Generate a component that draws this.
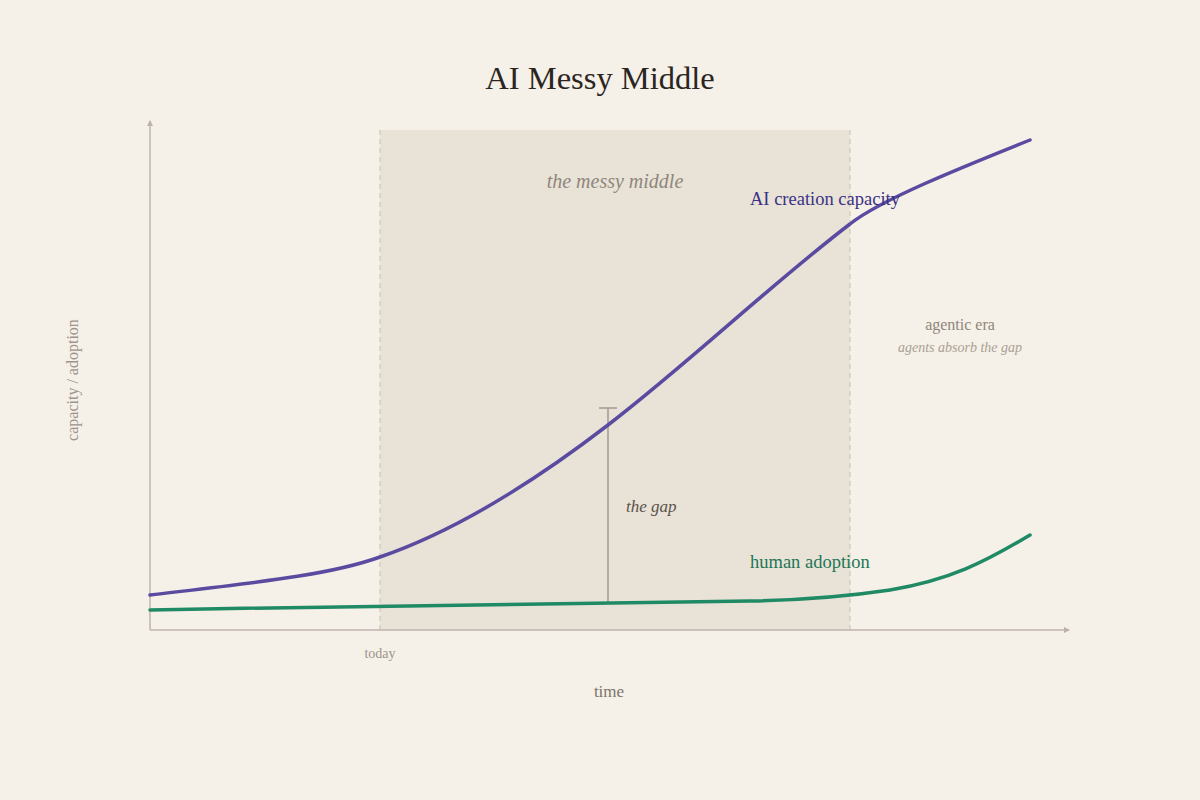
const serif = "font-['Liberation_Serif','Times_New_Roman',serif]";

export default function App() {
  return (
    <div className={`h-[800px] w-[1200px] bg-[#f5f0e8] ${serif}`}>
      <h1 className="pt-[58px] text-center text-[32.5px] leading-[40px] text-[#2a2521]">AI Messy Middle</h1>
      <svg width="1200" height="702" viewBox="0 98 1200 702" className="block">
        <defs>
          <marker id="arr" viewBox="0 0 6 6" refX="5" refY="3" markerWidth="4" markerHeight="4" orient="auto">
            <path d="M0,0 L6,3 L0,6 z" fill="#bdb1aa" />
          </marker>
        </defs>

        {/* messy middle band */}
        <rect x="380" y="130" width="470" height="500" fill="#e8e2d7" />
        <line x1="380" y1="130" x2="380" y2="630" stroke="#d8cec2" strokeWidth="1.5" strokeDasharray="5 4" />
        <line x1="850" y1="130" x2="850" y2="630" stroke="#d8cec2" strokeWidth="1.5" strokeDasharray="5 4" />

        {/* axes */}
        <line x1="150" y1="630" x2="150" y2="121" stroke="#c0b4ae" strokeWidth="1.5" markerEnd="url(#arr)" />
        <line x1="150" y1="630" x2="1069" y2="630" stroke="#c0b4ae" strokeWidth="1.5" markerEnd="url(#arr)" />

        {/* gap marker */}
        <line x1="608" y1="408" x2="608" y2="603" stroke="#a39a90" strokeWidth="1.5" />
        <line x1="599" y1="408" x2="617" y2="408" stroke="#a39a90" strokeWidth="1.5" />
        <line x1="599" y1="603" x2="617" y2="603" stroke="#a39a90" strokeWidth="1.5" />

        {/* curves */}
        <path
          d="M150,610 C400,605 680,603 750,601 C810,600 850,596 890,590 C950,580 985,562 1030,535"
          fill="none"
          stroke="#1f8a64"
          strokeWidth="3.5"
          strokeLinecap="round"
        />
        <path
          d="M150,595 C260,582 330,575 380,557 C450,533 530,485 608,425 C690,362 770,285 850,224 C880,200 960,168 1030,140"
          fill="none"
          stroke="#5a4ba0"
          strokeWidth="3.5"
          strokeLinecap="round"
        />

        {/* labels */}
        <text x="615" y="188" textAnchor="middle" fontSize="20" fontStyle="italic" fill="#8f877b">the messy middle</text>
        <text x="750" y="205" fontSize="18.5" fill="#3b3285">AI creation capacity</text>
        <text x="960" y="330" textAnchor="middle" fontSize="16" fill="#8f877b">agentic era</text>
        <text x="960" y="352" textAnchor="middle" fontSize="14" fontStyle="italic" fill="#aaa194">agents absorb the gap</text>
        <text x="626" y="512" fontSize="17" fontStyle="italic" fill="#5b524a">the gap</text>
        <text x="750" y="568" fontSize="18.5" fill="#1d7656">human adoption</text>
        <text x="380" y="658" textAnchor="middle" fontSize="14" fill="#9d958b">today</text>
        <text x="609" y="697" textAnchor="middle" fontSize="17" fill="#7d756b">time</text>
        <text x="78" y="380" textAnchor="middle" fontSize="16" fill="#9d958b" transform="rotate(-90 78 380)">capacity / adoption</text>
      </svg>
    </div>
  );
}
